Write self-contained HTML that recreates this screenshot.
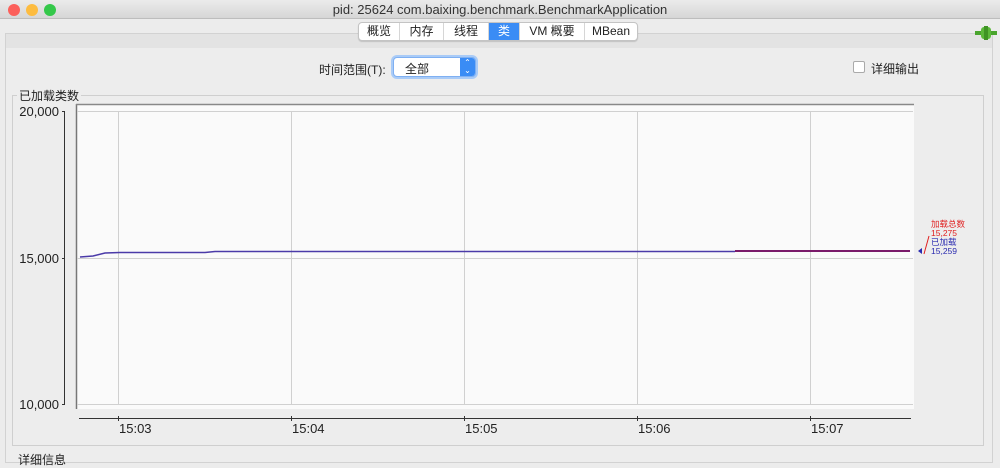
<!DOCTYPE html>
<html><head><meta charset="utf-8">
<style>
*{margin:0;padding:0;box-sizing:border-box}
body{width:1000px;height:458px;overflow:hidden;background:#ececec;font-family:"Liberation Sans","Noto Sans CJK SC",sans-serif;font-size:12px;color:#222;position:relative}
.title{position:absolute;left:0;top:0;width:1000px;height:19px;background:linear-gradient(#ebebeb,#d6d6d6);border-bottom:1px solid #bdbdbd;text-align:center;font-size:13px;line-height:19px;color:#333}
.dot{position:absolute;top:4px;width:12px;height:12px;border-radius:50%}
.panel{position:absolute;left:5px;top:33px;width:988px;height:430px;border:1px solid #d2d2d2;background:#ededed}
.band{position:absolute;left:6px;top:34px;width:986px;height:14px;background:#e3e3e3}
.tabs{position:absolute;left:358px;top:22px;width:280px;height:19px;display:flex;border:1px solid #c4c4c4;border-radius:4px;background:#fff;overflow:hidden;box-shadow:0 1px 1px rgba(0,0,0,.15)}
.tabs div{line-height:17px;font-size:12px;border-right:1px solid #d6d6d6;flex:none;text-align:center}
.tabs div:last-child{border-right:none}
.tabs .sel{background:#3a8cf5;color:#fff}
.sel-box{position:absolute;left:393px;top:57px;width:83px;height:20px;border:1px solid #7fb0f2;border-radius:4px;background:#fff;box-shadow:0 0 0 2px #a9cbf7}
.sel-box span{position:absolute;left:11px;top:2px}
.sel-box i{position:absolute;right:0;top:0;width:15px;height:18px;background:#3a8cf5;border-radius:0 3px 3px 0;color:#fff;font-style:normal;font-size:8px;line-height:8px;text-align:center;padding-top:1px}
</style></head><body>
<div class="title">pid: 25624 com.baixing.benchmark.BenchmarkApplication
<div class="dot" style="left:8px;background:#fc605b"></div>
<div class="dot" style="left:26px;background:#fdbc40"></div>
<div class="dot" style="left:44px;background:#34c84a"></div>
</div>
<div class="panel"></div>
<div class="band"></div>
<div class="tabs"><div style="width:41px">概览</div><div style="width:44px">内存</div><div style="width:45px">线程</div><div class="sel" style="width:31px">类</div><div style="width:65px">VM 概要</div><div style="width:52px">MBean</div></div>
<svg style="position:absolute;left:975px;top:26px" width="22" height="14"><rect x="0" y="5" width="22" height="4" fill="#4aa52e"/><rect x="6" y="1" width="10" height="12" rx="3" fill="#5cb83a"/><rect x="9" y="0" width="4" height="14" fill="#3f9424"/></svg>
<div style="position:absolute;left:319px;top:61px">时间范围(T):</div>
<div class="sel-box"><span>全部</span><i>⌃<br>⌄</i></div>
<div style="position:absolute;left:853px;top:61px;width:12px;height:12px;border:1px solid #aaa;border-radius:2px;background:#fff"></div>
<div style="position:absolute;left:871px;top:60px">详细输出</div>
<div style="position:absolute;left:12px;top:95px;width:972px;height:351px;border:1px solid #cfcfcf"></div>
<div style="position:absolute;left:17px;top:87px;background:#ededed;padding:0 2px">已加载类数</div>
<svg style="position:absolute;left:0;top:0" width="1000" height="458">
<rect x="76" y="104" width="838" height="305" fill="#fafafa"/>
<line x1="76.5" y1="104" x2="76.5" y2="409" stroke="#777" stroke-width="1.5"/>
<line x1="76" y1="104.5" x2="914" y2="104.5" stroke="#888" stroke-width="1.5"/>
<g stroke="#d0d0d0" stroke-width="1">
<line x1="77" y1="111.5" x2="913" y2="111.5"/><line x1="77" y1="258.5" x2="913" y2="258.5"/><line x1="77" y1="404.5" x2="913" y2="404.5"/>
<line x1="118.5" y1="111" x2="118.5" y2="404"/><line x1="291.5" y1="111" x2="291.5" y2="404"/><line x1="464.5" y1="111" x2="464.5" y2="404"/><line x1="637.5" y1="111" x2="637.5" y2="404"/><line x1="810.5" y1="111" x2="810.5" y2="404"/>
</g>
<g stroke="#333" stroke-width="1">
<line x1="64.5" y1="111" x2="64.5" y2="404"/><line x1="62" y1="111.5" x2="65" y2="111.5"/><line x1="62" y1="258.5" x2="65" y2="258.5"/><line x1="62" y1="404.5" x2="65" y2="404.5"/>
<line x1="79" y1="418.5" x2="911" y2="418.5"/>
<line x1="118.5" y1="416" x2="118.5" y2="421"/><line x1="291.5" y1="416" x2="291.5" y2="421"/><line x1="464.5" y1="416" x2="464.5" y2="421"/><line x1="637.5" y1="416" x2="637.5" y2="421"/><line x1="810.5" y1="416" x2="810.5" y2="421"/>
</g>
<polyline points="80,257 93,256 105,253 120,252.5 205,252.5 215,251.5 735,251.5" fill="none" stroke="#4a3aa8" stroke-width="1.5"/>
<line x1="735" y1="251" x2="910" y2="251" stroke="#7a1a6a" stroke-width="2"/>
<polygon points="918,251 922,248 922,254" fill="#2a2ab0"/>
<line x1="924" y1="254" x2="929" y2="236" stroke="#e02020" stroke-width="1"/>
<g font-family="Liberation Sans,sans-serif" font-size="13" fill="#222">
<text x="59" y="116" text-anchor="end">20,000</text><text x="59" y="263" text-anchor="end">15,000</text><text x="59" y="409" text-anchor="end">10,000</text>
<text x="119" y="433">15:03</text><text x="292" y="433">15:04</text><text x="465" y="433">15:05</text><text x="638" y="433">15:06</text><text x="811" y="433">15:07</text>
</g>
<g font-family="Liberation Sans,Noto Sans CJK SC,sans-serif" font-size="8.5">
<text x="931" y="227" fill="#e02020">加载总数</text><text x="931" y="236" fill="#e02020">15,275</text>
<text x="931" y="245" fill="#2a2ab0">已加载</text><text x="931" y="254" fill="#2a2ab0">15,259</text>
</g>
</svg>
<div style="position:absolute;left:18px;top:451px">详细信息</div>
</body></html>
